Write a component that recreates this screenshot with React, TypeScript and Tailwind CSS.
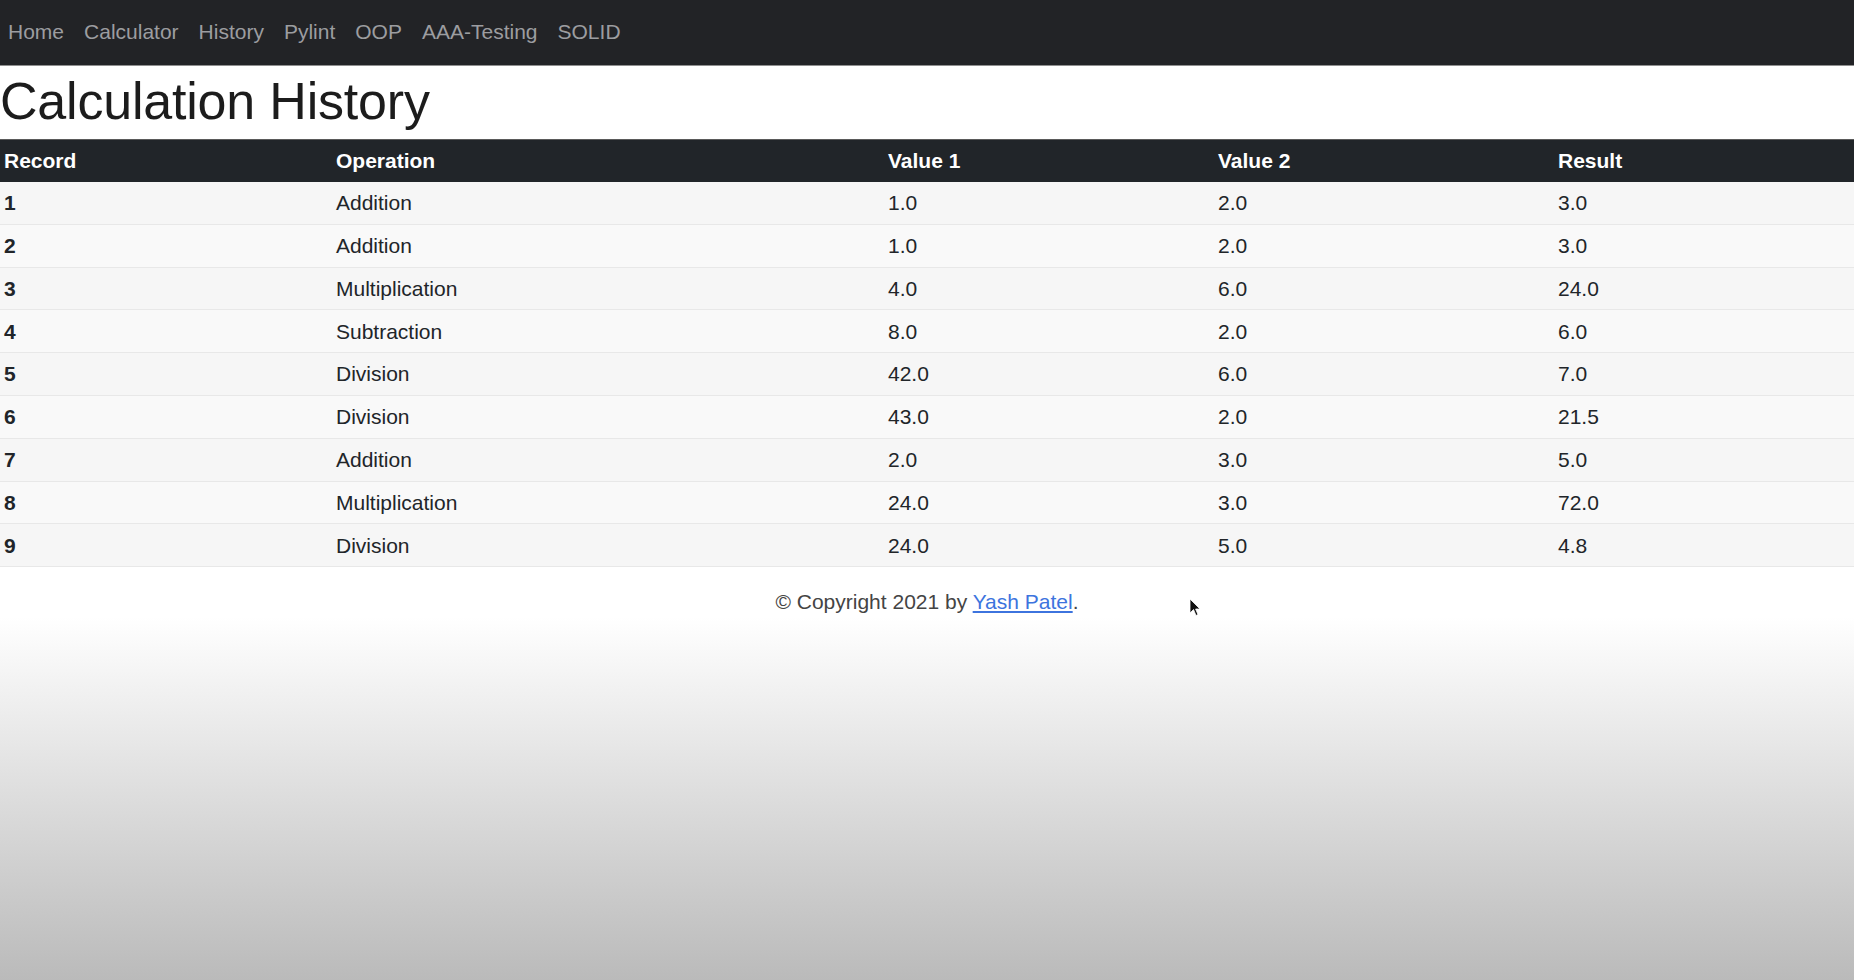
import React from "react";

const navItems = ["Home", "Calculator", "History", "Pylint", "OOP", "AAA-Testing", "SOLID"];

const rows: [string, string, string, string, string][] = [
  ["1", "Addition", "1.0", "2.0", "3.0"],
  ["2", "Addition", "1.0", "2.0", "3.0"],
  ["3", "Multiplication", "4.0", "6.0", "24.0"],
  ["4", "Subtraction", "8.0", "2.0", "6.0"],
  ["5", "Division", "42.0", "6.0", "7.0"],
  ["6", "Division", "43.0", "2.0", "21.5"],
  ["7", "Addition", "2.0", "3.0", "5.0"],
  ["8", "Multiplication", "24.0", "3.0", "72.0"],
  ["9", "Division", "24.0", "5.0", "4.8"],
];

export default function App() {
  return (
    <div
      className="relative min-h-screen w-full bg-[linear-gradient(to_bottom,#ffffff_0%,#ffffff_63%,#bababa_100%)] text-[#212529]"
      style={{ fontFamily: '"Liberation Sans", Arial, Helvetica, sans-serif' }}
    >
      <nav className="flex h-[66px] items-center gap-[20px] border-b border-[#8f8f8f] bg-[#222326] pl-[8px] pb-[2px] text-[21px] text-[#9c9da0]">
        {navItems.map((n) => (
          <span key={n} className="whitespace-nowrap">
            {n}
          </span>
        ))}
      </nav>

      <h1 className="mt-[5px] mb-[7px] text-[52px] leading-[61px] font-normal tracking-[-0.2px] text-[#1c1c1c]">
        Calculation History
      </h1>

      <div className="w-full text-[21px]">
        <div className="grid h-[43px] grid-cols-[332px_552px_330px_340px_1fr] items-center border-t border-[#5a5a5a] bg-[#212529] font-bold text-white">
          <div className="px-[4px]">Record</div>
          <div className="px-[4px]">Operation</div>
          <div className="px-[4px]">Value 1</div>
          <div className="px-[4px]">Value 2</div>
          <div className="px-[4px]">Result</div>
        </div>
        {rows.map((r, i) => (
          <div
            key={r[0]}
            className={
              "grid h-[42.8px] grid-cols-[332px_552px_330px_340px_1fr] items-center border-b border-[#e8e8e8] " +
              (i % 2 === 0 ? "bg-[#f6f6f6]" : "bg-[#f9f9f9]")
            }
          >
            <div className="px-[4px] font-bold">{r[0]}</div>
            <div className="px-[4px]">{r[1]}</div>
            <div className="px-[4px]">{r[2]}</div>
            <div className="px-[4px]">{r[3]}</div>
            <div className="px-[4px]">{r[4]}</div>
          </div>
        ))}
      </div>

      <footer className="mt-[20px] text-center text-[21px] leading-[30px] text-[#444]">
        © Copyright 2021 by{" "}
        <a href="#" className="text-[#3d74de] underline">
          Yash Patel
        </a>
        .
      </footer>

      <svg
        className="absolute left-[1189px] top-[598px]"
        width="12"
        height="19"
        viewBox="0 0 12 19"
      >
        <path d="M1 1 L1 15 L4.5 11.5 L7 17.5 L9 16.6 L6.6 11 L11 11 Z" fill="#111" stroke="#fff" strokeWidth="0.8" />
      </svg>
    </div>
  );
}
